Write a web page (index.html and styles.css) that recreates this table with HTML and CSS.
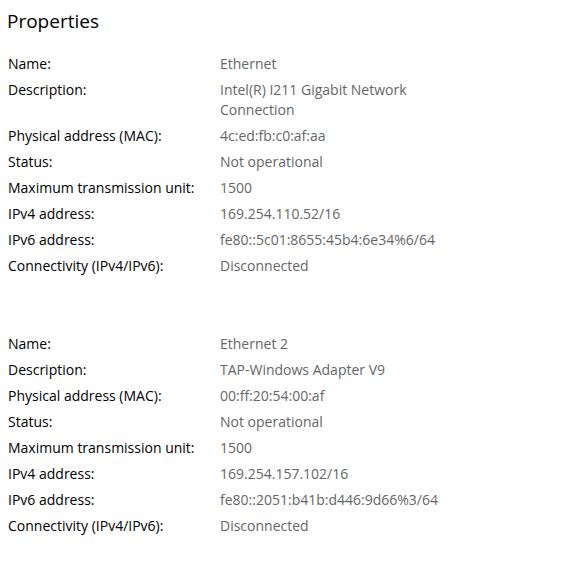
FILE: index.html
```html
<!DOCTYPE html>
<html>
<head>
<meta charset="utf-8">
<link rel="stylesheet" href="styles.css">
</head>
<body>
<div class="page">
  <h1 class="title">Properties</h1>
  <dl class="props">
    <dt>Name:</dt><dd>Ethernet</dd>
    <dt>Description:</dt><dd>Intel(R) I211 Gigabit Network Connection</dd>
    <dt>Physical address (MAC):</dt><dd>4c:ed:fb:c0:af:aa</dd>
    <dt>Status:</dt><dd>Not operational</dd>
    <dt>Maximum transmission unit:</dt><dd>1500</dd>
    <dt>IPv4 address:</dt><dd>169.254.110.52/16</dd>
    <dt>IPv6 address:</dt><dd>fe80::5c01:8655:45b4:6e34%6/64</dd>
    <dt>Connectivity (IPv4/IPv6):</dt><dd>Disconnected</dd>
  </dl>
  <dl class="props">
    <dt>Name:</dt><dd>Ethernet 2</dd>
    <dt>Description:</dt><dd>TAP-Windows Adapter V9</dd>
    <dt>Physical address (MAC):</dt><dd>00:ff:20:54:00:af</dd>
    <dt>Status:</dt><dd>Not operational</dd>
    <dt>Maximum transmission unit:</dt><dd>1500</dd>
    <dt>IPv4 address:</dt><dd>169.254.157.102/16</dd>
    <dt>IPv6 address:</dt><dd>fe80::2051:b41b:d446:9d66%3/64</dd>
    <dt>Connectivity (IPv4/IPv6):</dt><dd>Disconnected</dd>
  </dl>
</div>
</body>
</html>
```
FILE: styles.css
```css
html, body {
  margin: 0;
  padding: 0;
  background: #ffffff;
}
.page {
  font-family: "Open Sans", "Noto Sans", sans-serif;
  color: #000;
  padding: 7px 0 0 8px;
}
.title {
  font-size: 19px;
  font-weight: 400;
  line-height: 28px;
  margin: 0 0 0 -1px;
  color: #000;
}
.props {
  display: grid;
  grid-template-columns: 212px 230px;
  row-gap: 6px;
  margin: 19px 0 0 0;
  font-size: 14px;
  line-height: 20px;
}
.props + .props {
  margin-top: 58px;
}
.props dt {
  margin: 0;
  color: #000;
}
.props dd {
  margin: 0;
  color: #666;
}
```
